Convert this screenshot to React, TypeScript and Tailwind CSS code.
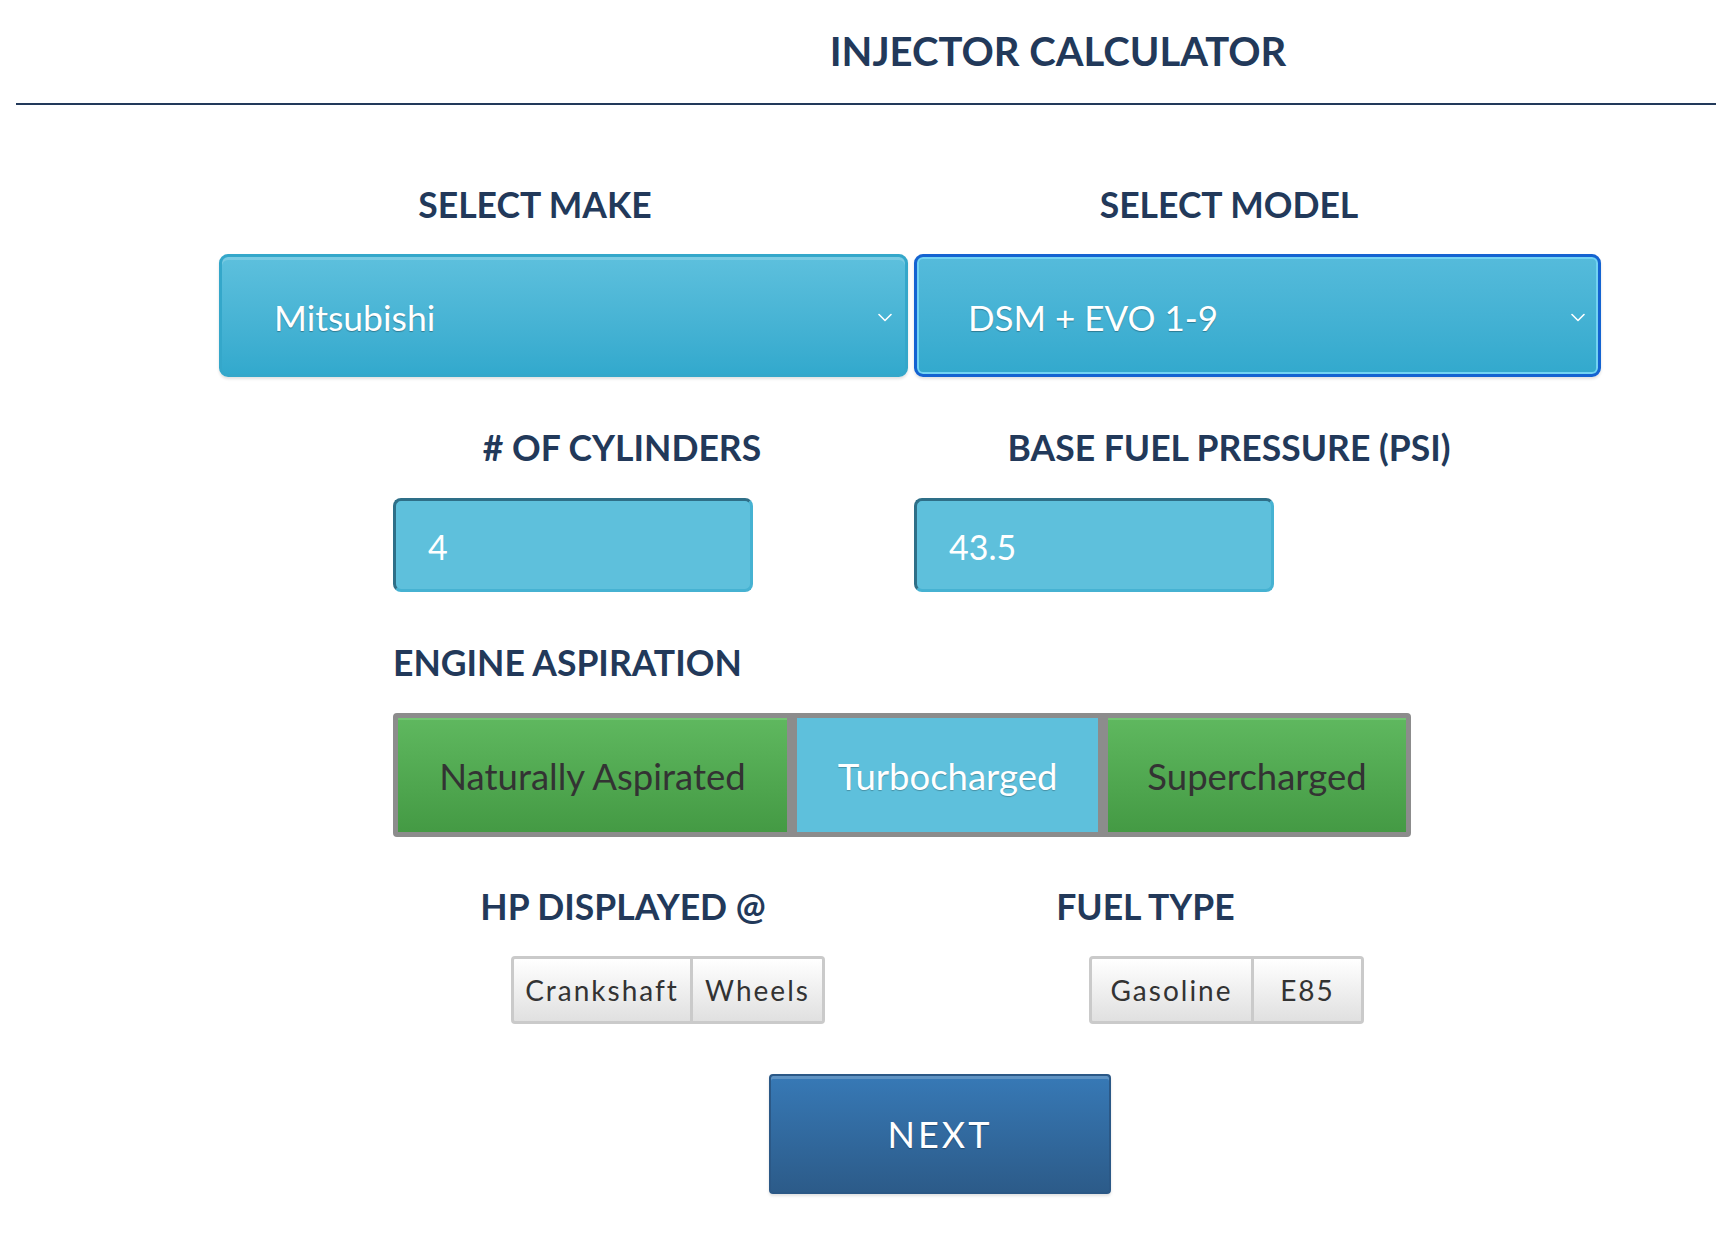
import React from "react";

function Chevron() {
  return (
    <svg width="14" height="9" viewBox="0 0 14 9" fill="none" className="shrink-0">
      <path d="M1 1.5 L7 7.5 L13 1.5" stroke="white" strokeWidth="1.6" strokeLinecap="round" strokeLinejoin="round" />
    </svg>
  );
}

export default function App() {
  return (
    <div className="min-h-[1258px] w-[1716px] overflow-hidden bg-white font-['Lato',sans-serif] text-[#22395a]">
      {/* Title */}
      <div className="pl-[400px] pt-[26px] text-center text-[40px] font-bold leading-[50px]">
        INJECTOR CALCULATOR
      </div>
      <div className="ml-[16px] mt-[27px] h-[2px] bg-[#22395a]" />

      {/* Select labels */}
      <div className="mt-[80px] flex pl-[219px] text-[35.5px] font-bold leading-[40px]">
        <div className="w-[632px] text-center">SELECT MAKE</div>
        <div className="w-[756px] text-center">SELECT MODEL</div>
      </div>

      {/* Selects */}
      <div className="mt-[29px] flex gap-[6px] pl-[219px]">
        <div className="flex h-[123px] w-[689px] items-center justify-between rounded-[9px] border-[3px] border-[#34a7ca] bg-gradient-to-b from-[#5dc0dd] to-[#32a9cd] pl-[52px] pr-[13px] pt-[4px] shadow-[inset_0_3px_0_rgba(255,255,255,0.18),0_2px_3px_rgba(0,0,0,0.12)]">
          <span className="text-[35.5px] leading-none text-white [text-shadow:0_1px_1px_rgba(0,0,0,0.3)]">Mitsubishi</span>
          <Chevron />
        </div>
        <div className="flex h-[123px] w-[687px] items-center justify-between rounded-[9px] border-[3px] border-[#1463d1] bg-gradient-to-b from-[#55bbdb] to-[#32a9cd] pl-[51px] pr-[13px] pt-[4px] shadow-[inset_0_0_0_2px_#72d3f2,0_2px_3px_rgba(0,0,0,0.12)]">
          <span className="text-[35px] leading-none text-white [text-shadow:0_1px_1px_rgba(0,0,0,0.3)]">DSM + EVO 1-9</span>
          <Chevron />
        </div>
      </div>

      {/* Cylinder / pressure labels */}
      <div className="mt-[51px] flex pl-[393px] text-[35.5px] font-bold leading-[40px]">
        <div className="w-[458px] text-center"># OF CYLINDERS</div>
        <div className="w-[756px] text-center">BASE FUEL PRESSURE (PSI)</div>
      </div>

      {/* Inputs */}
      <div className="mt-[30px] flex gap-[161px] pl-[393px]">
        <div className="flex h-[94px] w-[360px] items-center rounded-[8px] border-[3px] border-t-[#2e6f88] border-l-[#2e6f88] border-r-[#46b2d2] border-b-[#46b2d2] bg-[#5ec0dc] pl-[32px] pt-[4px]">
          <span className="text-[34px] leading-none text-white">4</span>
        </div>
        <div className="flex h-[94px] w-[360px] items-center rounded-[8px] border-[3px] border-t-[#2e6f88] border-l-[#2e6f88] border-r-[#46b2d2] border-b-[#46b2d2] bg-[#5ec0dc] pl-[32px] pt-[4px]">
          <span className="text-[34px] leading-none text-white">43.5</span>
        </div>
      </div>

      {/* Engine aspiration */}
      <div className="mt-[51px] pl-[393px] text-[35.5px] font-bold leading-[40px]">ENGINE ASPIRATION</div>
      <div className="mt-[30px] flex pl-[393px]">
        <div className="flex h-[124px] w-[399px] items-center justify-center rounded-l-[4px] border-[5px] border-[#8c8c8c] bg-gradient-to-b from-[#5fb85f] to-[#449a44] pt-[2px] shadow-[inset_0_2px_0_#72c772]">
          <span className="text-[36.5px] leading-none text-[#333333]">Naturally Aspirated</span>
        </div>
        <div className="flex h-[124px] w-[311px] items-center justify-center border-[5px] border-[#8c8c8c] bg-[#5ec0dc] pt-[2px]">
          <span className="text-[36.5px] leading-none text-white [text-shadow:0_1px_1px_rgba(0,0,0,0.25)]">Turbocharged</span>
        </div>
        <div className="flex h-[124px] w-[308px] items-center justify-center rounded-r-[4px] border-[5px] border-[#8c8c8c] bg-gradient-to-b from-[#5fb85f] to-[#449a44] pt-[2px] shadow-[inset_0_2px_0_#72c772]">
          <span className="text-[36.5px] leading-none text-[#333333]">Supercharged</span>
        </div>
      </div>

      {/* HP / fuel labels */}
      <div className="mt-[50px] flex pl-[393px] text-[35.5px] font-bold leading-[40px]">
        <div className="w-[460px] text-center">HP DISPLAYED @</div>
        <div className="w-[585px] text-center">FUEL TYPE</div>
      </div>

      {/* Small button groups */}
      <div className="mt-[29px] flex pl-[511px]">
        <div className="flex">
          <div className="flex h-[68px] w-[182px] items-center justify-center rounded-l-[4px] border-[3px] border-[#cacaca] bg-gradient-to-b from-white to-[#e0e0e0]">
            <span className="text-[28px] leading-none tracking-[2px] text-[#333333]">Crankshaft</span>
          </div>
          <div className="flex h-[68px] w-[132px] items-center justify-center rounded-r-[4px] border-[3px] border-l-0 border-[#cacaca] bg-gradient-to-b from-white to-[#e0e0e0]">
            <span className="text-[28px] leading-none tracking-[2px] text-[#333333]">Wheels</span>
          </div>
        </div>
        <div className="ml-[264px] flex">
          <div className="flex h-[68px] w-[165px] items-center justify-center rounded-l-[4px] border-[3px] border-[#cacaca] bg-gradient-to-b from-white to-[#e0e0e0]">
            <span className="text-[28px] leading-none tracking-[2px] text-[#333333]">Gasoline</span>
          </div>
          <div className="flex h-[68px] w-[110px] items-center justify-center rounded-r-[4px] border-[3px] border-l-0 border-[#cacaca] bg-gradient-to-b from-white to-[#e0e0e0]">
            <span className="text-[28px] leading-none tracking-[2px] text-[#333333]">E85</span>
          </div>
        </div>
      </div>

      {/* Next */}
      <div className="mt-[50px] pl-[769px]">
        <div className="flex h-[120px] w-[342px] items-center justify-center rounded-[4px] border-[2px] border-[#2b5886] bg-gradient-to-b from-[#3779b6] to-[#2c5b89] shadow-[inset_0_3px_0_rgba(255,255,255,0.2),0_2px_3px_rgba(0,0,0,0.12)]">
          <span className="text-[36px] leading-none tracking-[3px] text-white [text-shadow:0_1px_1px_rgba(0,0,0,0.3)]">NEXT</span>
        </div>
      </div>
    </div>
  );
}
